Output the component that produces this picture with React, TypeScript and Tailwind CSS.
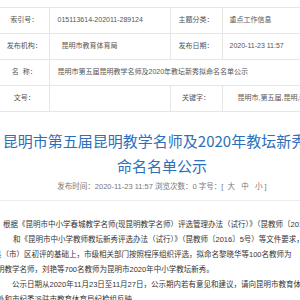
import React from 'react';

const sans = '"Liberation Sans","Noto Sans CJK SC",sans-serif';

const infoRows = [
  { label: '索引号：', value: '015113614-202011-289124', label2: '主题分类：', value2: '重点工作信息' },
  { label: '发布机构：', value: '\u00a0\u00a0昆明市教育体育局', label2: '发布日期：', value2: '2020-11-23 11:57' },
];

const bodyLines = [
  { pad: 'pl-[3px]', text: '根据《昆明市中小学春城教学名师(现昆明教学名师）评选管理办法（试行）》（昆教师〔2016〕4号）' },
  { pad: 'pl-[13px]', text: '和《昆明市中小学教师教坛新秀评选办法（试行）》（昆教师〔2016〕5号）等文件要求，' },
  { pad: '-ml-[6px]', text: '县（市）区初评的基础上，市级相关部门按照程序组织评选，拟命名黎晓华等100名教师为' },
  { pad: '-ml-[3px]', text: '明教学名师，刘艳等700名教师为昆明市2020年中小学教坛新秀。' },
  { pad: 'pl-[12px]', text: '公示日期从2020年11月23日至11月27日，公示期内若有意见和建议，请向昆明市教育体育局人事' },
  { pad: '-ml-[3px]', text: '处和市纪委派驻市教育体育局纪检组反映。' },
];

export default function App() {
  return (
    <div className="w-[300px] h-[300px] overflow-hidden bg-white">
      <div className="w-[324px] pt-[7px]" style={{ fontFamily: sans }}>
        {/* info table */}
        <table className="w-full border-collapse table-fixed text-[7px] text-[#555]">
          <colgroup>
            <col className="w-[49px]" />
            <col className="w-[121px]" />
            <col className="w-[52px]" />
            <col />
          </colgroup>
          <tbody>
            {infoRows.map((r) => (
              <tr key={r.label} className="h-[26px] border-y border-[#e6e6e6]">
                <td className="text-center border-r border-[#e6e6e6]">{r.label}</td>
                <td className="pl-[8px] whitespace-nowrap border-r border-[#e6e6e6]">{r.value}</td>
                <td className="text-center border-r border-[#e6e6e6]">{r.label2}</td>
                <td className="pl-[7px] whitespace-nowrap">{r.value2}</td>
              </tr>
            ))}
            <tr className="h-[26px] border-y border-[#e6e6e6]">
              <td className="text-center border-r border-[#e6e6e6]">名&nbsp;&nbsp;称：</td>
              <td colSpan={3} className="pl-[8px] whitespace-nowrap">
                昆明市第五届昆明教学名师及2020年教坛新秀拟命名名单公示
              </td>
            </tr>
            <tr className="h-[26px] border-y border-[#e6e6e6]">
              <td className="text-center border-r border-[#e6e6e6]">文号：</td>
              <td className="border-r border-[#e6e6e6]"></td>
              <td className="text-center border-r border-[#e6e6e6]">关键字：</td>
              <td className="pl-[15px] whitespace-nowrap">昆明市,第五届,昆明,教学名师,教坛新秀</td>
            </tr>
          </tbody>
        </table>

        {/* title */}
        <h1
          className="mt-[16px] text-center text-[15px] leading-[25px] font-normal text-[#2c6fbb]"
          style={{ fontFamily: '"Noto Sans CJK SC",sans-serif' }}
        >
          昆明市第五届昆明教学名师及2020年教坛新秀拟命名名单公示
        </h1>

        {/* meta */}
        <div className="mt-[1px] pb-[6px] border-b border-[#ececec] text-center text-[7.5px] leading-[15px] text-[#777] whitespace-nowrap">
          发布时间：2020-11-23 11:57 浏览次数：0 字号：[&nbsp;&nbsp;大&nbsp;&nbsp;&nbsp;中&nbsp;&nbsp;&nbsp;小&nbsp;]
        </div>

        {/* body */}
        <div className="mt-[16px] text-[7.5px] leading-[15px] text-[#333]">
          {bodyLines.map((l, i) => (
            <div key={i} className={`whitespace-nowrap ${l.pad}`}>
              {l.text}
            </div>
          ))}
        </div>
      </div>
    </div>
  );
}
